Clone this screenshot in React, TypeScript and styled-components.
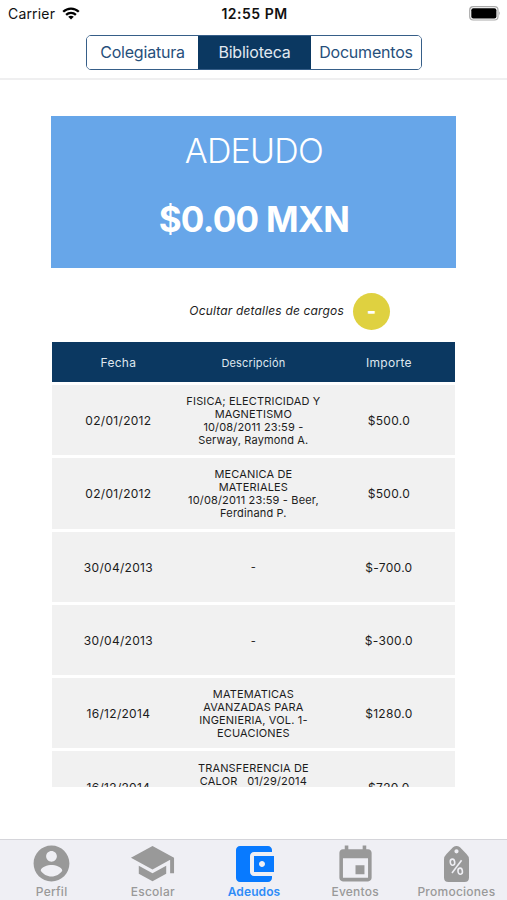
import React from "react";
import styled, { createGlobalStyle } from "styled-components";

const GlobalStyle = createGlobalStyle`
  * { box-sizing: border-box; }
  body { margin: 0; background: #fff; font-family: Inter, "Liberation Sans", sans-serif; color: #1c1c1c; }
`;

const Screen = styled.div`
  width: 507px;
  height: 900px;
  overflow: hidden;
  display: flex;
  flex-direction: column;
  background: #fff;
`;

const StatusBar = styled.div`
  height: 27px;
  flex: none;
  display: grid;
  grid-template-columns: 1fr auto 1fr;
  align-items: center;
  padding: 0 6px 0 8px;
  font-size: 14px;
  line-height: 17px;
  color: #111;
`;

const Carrier = styled.div`
  display: flex;
  align-items: center;
  gap: 7px;
  letter-spacing: 0.18px;
`;

const Clock = styled.div`
  font-weight: 600;
  letter-spacing: 0.5px;
`;

const BatteryIcon = styled.svg`
  display: block;
  justify-self: end;
`;

const Header = styled.header`
  height: 53px;
  flex: none;
  display: flex;
  justify-content: center;
  align-items: flex-start;
  padding: 8px 0 0 1px;
  border-bottom: 2px solid #efeff0;
`;

const Segments = styled.div`
  display: grid;
  grid-template-columns: 111px 113px 110px;
  width: 336px;
  height: 35px;
  border: 1px solid #365e88;
  border-radius: 5px;
  overflow: hidden;
`;

const Segment = styled.button<{ $active?: boolean }>`
  border: 0;
  padding: 0 0 1px;
  background: ${(p) => (p.$active ? "#0b3861" : "#fff")};
  color: ${(p) => (p.$active ? "#e1e9f1" : "#264f7b")};
  font: 400 16px/20px Inter, sans-serif;
  letter-spacing: -0.2px;
  white-space: nowrap;
`;

const Balance = styled.section`
  flex: none;
  width: 405px;
  height: 152px;
  margin: 36px 0 0 51.4px;
  background: #67a6e9;
  color: #fff;
  text-align: center;
`;

const BalanceTitle = styled.div`
  padding-top: 13px;
  font-size: 34px;
  font-weight: 300;
  line-height: 44px;
  letter-spacing: -0.8px;
`;

const BalanceAmount = styled.div`
  padding-top: 24px;
  font-size: 35px;
  font-weight: 700;
  line-height: 44px;
  letter-spacing: -0.7px;
`;

const DetailsToggle = styled.div`
  flex: none;
  height: 74px;
  padding: 12px 117px 0 0;
  display: flex;
  justify-content: flex-end;
  align-items: center;
  gap: 9px;
`;

const ToggleLabel = styled.span`
  margin-top: -1px;
  font-size: 12px;
  font-style: italic;
  letter-spacing: 0.17px;
`;

const ToggleButton = styled.button`
  width: 37px;
  height: 37px;
  border: 0;
  border-radius: 50%;
  padding: 0;
  display: grid;
  place-items: center;
  background: #dfd140;
  color: #fff;
  font: 800 20px/20px Inter, sans-serif;
`;

const Table = styled.div`
  flex: none;
  width: 403px;
  height: 445px;
  margin-left: 52.4px;
  overflow: hidden;
`;

const Row = styled.div`
  display: grid;
  grid-template-columns: 132px 138px 133px;
  align-items: center;
  height: 70.3px;
  margin-bottom: 3px;
  padding-top: 2px;
  background: #f1f1f1;
  text-align: center;
`;

const HeadRow = styled(Row)`
  height: 40px;
  background: #0b3861;
  color: #dfe7ef;
`;

const Cell = styled.div<{ $small?: boolean }>`
  font-size: ${(p) => (p.$small ? "11px" : "12px")};
  line-height: ${(p) => (p.$small ? "13px" : "16px")};
  letter-spacing: ${(p) => (p.$small ? "0.16px" : "0.3px")};
  white-space: pre;
`;

const TabBar = styled.nav`
  flex: none;
  height: 61px;
  margin-top: auto;
  padding-left: 1px;
  display: grid;
  grid-template-columns: repeat(5, 1fr);
  background: #efeff4;
  border-top: 1px solid #d5d5da;
`;

const Tab = styled.div<{ $active?: boolean }>`
  display: flex;
  flex-direction: column;
  align-items: center;
  color: ${(p) => (p.$active ? "#087aff" : "#999999")};
`;

const TabIcon = styled.div`
  height: 47px;
  display: grid;
  place-items: center;
  svg { display: block; fill: currentColor; }
`;

const TabLabel = styled.div<{ $active?: boolean }>`
  margin-top: -2px;
  font-size: 12px;
  line-height: 14px;
  font-weight: ${(p) => (p.$active ? 600 : 500)};
  letter-spacing: ${(p) => (p.$active ? "0.1px" : "0.25px")};
  color: ${(p) => (p.$active ? "#2d8cf8" : "#999999")};
`;

const WifiIcon = () => (
  <svg width="18" height="13" viewBox="0 0 18 13" fill="none" stroke="#000" strokeWidth="2.3">
    <path d="M1.2 4.8C5.6.5 12.4.5 16.8 4.8" />
    <path d="M4.1 7.8c2.8-2.7 7-2.7 9.8 0" />
    <path d="M9 12.6 6.2 9.8c1.6-1.5 4-1.5 5.6 0Z" fill="#000" stroke="none" />
  </svg>
);

const icons = {
  profile: (
    <svg width="43" height="43" viewBox="0 0 24 24">
      <path d="M12 2C6.48 2 2 6.48 2 12s4.48 10 10 10 10-4.48 10-10S17.52 2 12 2zm0 3c1.66 0 3 1.34 3 3s-1.34 3-3 3-3-1.34-3-3 1.34-3 3-3zm0 14.2c-2.5 0-4.71-1.28-6-3.22.03-1.99 4-3.08 6-3.08 1.99 0 5.97 1.09 6 3.08-1.29 1.94-3.5 3.22-6 3.22z" />
    </svg>
  ),
  school: (
    <svg width="47" height="47" viewBox="0 0 24 24">
      <path d="M5 13.18v4L12 21l7-3.82v-4L12 17l-7-3.82zM12 3L1 9l11 6 9-4.91V17h2V9L12 3z" />
    </svg>
  ),
  wallet: (
    <svg width="48" height="48" viewBox="0 0 24 24">
      <path d="M21 18v1c0 1.1-.9 2-2 2H5c-1.11 0-2-.9-2-2V5c0-1.1.89-2 2-2h14c1.1 0 2 .9 2 2v1h-9c-1.11 0-2 .9-2 2v8c0 1.1.89 2 2 2h9zm-9-2h10V8H12v8zm4-2.5c-.83 0-1.500-.67-1.500-1.500s.67-1.500 1.500-1.500 1.500.67 1.500 1.500-.67 1.500-1.500 1.500z" />
    </svg>
  ),
  event: (
    <svg width="43" height="43" viewBox="0 -1 24 24">
      <path d="M17 12h-5v5h5v-5zM16 1v2H8V1H6v2H5c-1.11 0-1.99.9-1.99 2L3 19c0 1.1.89 2 2 2h14c1.1 0 2-.9 2-2V5c0-1.1-.9-2-2-2h-1V1h-2zm3 18H5V8h14v11z" />
    </svg>
  ),
  tag: (
    <svg width="25" height="36" viewBox="0 0 25 36">
      <path
        fillRule="evenodd"
        d="M9 1.3Q12.5-1.3 16 1.3L22.5 8Q25 10.3 25 13.5V31.5Q25 36 20.5 36H4.5Q0 36 0 31.5V13.5Q0 10.3 2.5 8ZM12.5 3.2a2.1 2.1 0 1 0 0 4.2 2.1 2.1 0 1 0 0-4.2Z"
      />
      <g fill="none" stroke="#efeff4" strokeWidth="1.6">
        <ellipse cx="8.5" cy="16.2" rx="2.2" ry="3.1" transform="rotate(-8 8.5 16.2)" />
        <ellipse cx="16.2" cy="25.2" rx="2.2" ry="3.1" transform="rotate(-8 16.2 25.2)" />
        <path d="M17.6 14.2 8 27" />
      </g>
    </svg>
  ),
};

const charges = [
  ["02/01/2012", "FISICA; ELECTRICIDAD Y\nMAGNETISMO\n10/08/2011 23:59 -\nSerway, Raymond A.", "$500.0"],
  ["02/01/2012", "MECANICA DE\nMATERIALES\n10/08/2011 23:59 - Beer,\nFerdinand P.", "$500.0"],
  ["30/04/2013", "-", "$-700.0"],
  ["30/04/2013", "-", "$-300.0"],
  ["16/12/2014", "MATEMATICAS\nAVANZADAS PARA\nINGENIERIA, VOL. 1-\nECUACIONES", "$1280.0"],
  ["16/12/2014", "TRANSFERENCIA DE\nCALOR   01/29/2014\n23:59 - Holman,\nJack P.", "$720.0"],
];

const tabs: { label: string; icon: React.ReactNode; active?: boolean }[] = [
  { label: "Perfil", icon: icons.profile },
  { label: "Escolar", icon: icons.school },
  { label: "Adeudos", icon: icons.wallet, active: true },
  { label: "Eventos", icon: icons.event },
  { label: "Promociones", icon: icons.tag },
];

export default function App() {
  return (
    <Screen>
      <GlobalStyle />
      <StatusBar>
        <Carrier>
          Carrier <WifiIcon />
        </Carrier>
        <Clock>12:55 PM</Clock>
        <BatteryIcon width="32" height="15" viewBox="0 0 32 15">
          <rect x=".7" y=".7" width="28.3" height="13.3" rx="3.5" fill="#fff" stroke="#aaa" strokeWidth="1.2" />
          <rect x="2.3" y="2.3" width="25.1" height="10.1" rx="2" fill="#000" />
          <path d="M30.2 5.2q1.5 2.2 0 4.4Z" fill="#888" />
        </BatteryIcon>
      </StatusBar>
      <Header>
        <Segments>
          <Segment>Colegiatura</Segment>
          <Segment $active>Biblioteca</Segment>
          <Segment>Documentos</Segment>
        </Segments>
      </Header>
      <Balance>
        <BalanceTitle>ADEUDO</BalanceTitle>
        <BalanceAmount>$0.00 MXN</BalanceAmount>
      </Balance>
      <DetailsToggle>
        <ToggleLabel>Ocultar detalles de cargos</ToggleLabel>
        <ToggleButton>-</ToggleButton>
      </DetailsToggle>
      <Table>
        <HeadRow>
          <Cell>Fecha</Cell>
          <Cell $small>Descripción</Cell>
          <Cell>Importe</Cell>
        </HeadRow>
        {charges.map(([date, description, amount], i) => (
          <Row key={i}>
            <Cell>{date}</Cell>
            <Cell $small>{description}</Cell>
            <Cell>{amount}</Cell>
          </Row>
        ))}
      </Table>
      <TabBar>
        {tabs.map((tab) => (
          <Tab key={tab.label} $active={tab.active}>
            <TabIcon>{tab.icon}</TabIcon>
            <TabLabel $active={tab.active}>{tab.label}</TabLabel>
          </Tab>
        ))}
      </TabBar>
    </Screen>
  );
}
